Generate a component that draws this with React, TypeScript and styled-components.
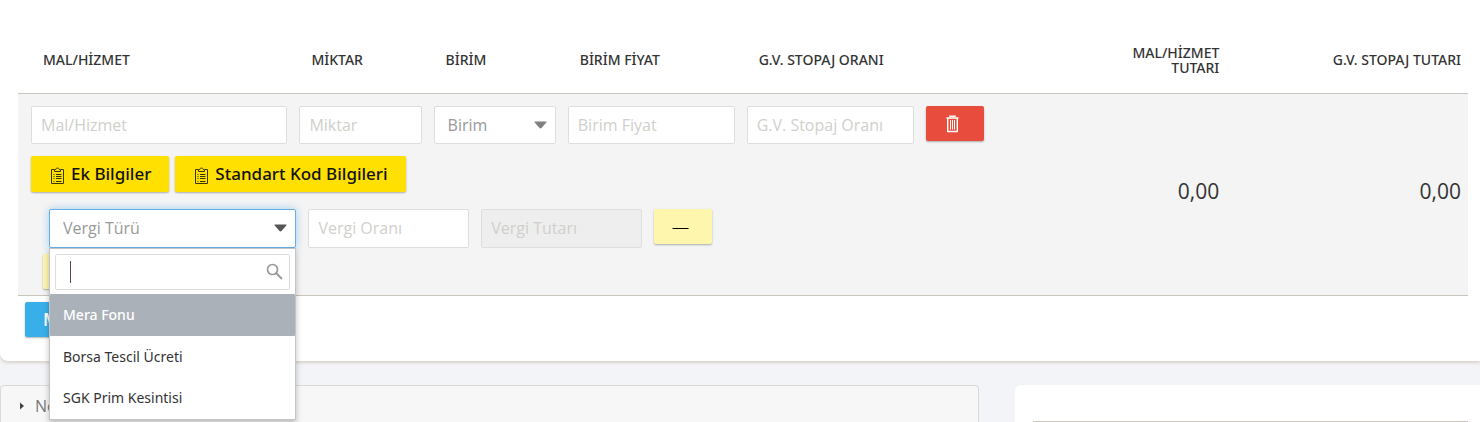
import React from "react";
import styled, { createGlobalStyle } from "styled-components";

const GlobalStyle = createGlobalStyle`
  *, *::before, *::after { box-sizing: border-box; }
  body {
    margin: 0;
    background: #f3f4f8;
    color: #333;
    font: 400 16px/20px "Open Sans", "Noto Sans", sans-serif;
  }
  button, input, select { font: inherit; }
`;

const Page = styled.div`
  min-height: 100vh;
  display: flex;
  flex-direction: column;
  gap: 24px;
  overflow: hidden;
`;

const ItemsCard = styled.section`
  padding: 26px 12px 24px 18px;
  background: #fff;
  border-bottom-left-radius: 8px;
  box-shadow: 0 2px 3px rgba(190, 170, 150, 0.45);
`;

const ItemsTable = styled.table`
  width: 100%;
  table-layout: fixed;
  border-collapse: separate;
  border-spacing: 0;
`;

const HeadCell = styled.th<{ $amount?: boolean }>`
  height: 68px;
  padding: 0 7px;
  border-bottom: 1px solid #c9c5bd;
  font-family: "Noto Sans", "Open Sans", sans-serif;
  font-size: 14px;
  font-weight: 500;
  line-height: 15px;
  vertical-align: middle;
  text-align: ${(p) => (p.$amount ? "right" : "left")};
`;

const EntryCell = styled.td`
  padding: 12px 7px 6px;
  border-bottom: 1px solid #c9c5bd;
  background: #f4f4f4;
`;

const AmountCell = styled.td`
  padding: 0 7px 7px;
  border-bottom: 1px solid #c9c5bd;
  background: #f4f4f4;
  font-size: 21px;
  line-height: 28px;
  text-align: right;
  vertical-align: middle;
`;

const FieldGrid = styled.div`
  display: grid;
  grid-template-columns: 6fr 3fr 3fr 4fr 4fr 4fr;
`;

const TaxGrid = styled.div`
  display: grid;
  grid-template-columns: 3fr 2fr 2fr 5fr;
  margin: 17px 18px 0;
`;

const HeadLabel = styled.label`
  padding-left: 18px;
`;

const Cell = styled.div`
  position: relative;
  min-width: 0;
  padding: 0 6px;
`;

const TextField = styled.input<{ $tall?: boolean }>`
  display: block;
  width: 100%;
  height: ${(p) => (p.$tall ? 39 : 38)}px;
  padding: 0 9px ${(p) => (p.$tall ? 2 : 0)}px;
  border: 1px solid #dedede;
  border-radius: 2px;
  background: #fff;
  color: #333;
  outline: none;
  &::placeholder { color: #d0d0cb; opacity: 1; }
  &:disabled { background: #eee; }
`;

const SelectWrap = styled.div`
  position: relative;
`;

const SelectField = styled.select<{ $open?: boolean }>`
  display: block;
  width: 100%;
  height: ${(p) => (p.$open ? 39 : 38)}px;
  padding: 0 30px ${(p) => (p.$open ? 2 : 0)}px 13px;
  appearance: none;
  border: 1px solid ${(p) => (p.$open ? "#66afe9" : "#dedede")};
  border-radius: 2px;
  background: #fff;
  color: #999;
  outline: none;
  box-shadow: ${(p) => (p.$open ? "0 0 8px rgba(102, 175, 233, 0.6)" : "none")};
`;

const Arrow = styled.svg`
  position: absolute;
  right: 9px;
  top: 15px;
  pointer-events: none;
`;

const tones = {
  yellow: ["#ffe000", "#111"],
  pale: ["#fff6ae", "#111"],
  red: ["#e84c3d", "#fff"],
  blue: ["#39afea", "#fff"],
};

const Button = styled.button<{ $tone: keyof typeof tones }>`
  display: inline-flex;
  align-items: center;
  gap: 5px;
  height: ${(p) => (p.$tone === "yellow" ? 36 : 35)}px;
  min-width: 58px;
  padding: 0 18px;
  border: 0;
  border-radius: 2px;
  background: ${(p) => tones[p.$tone][0]};
  color: ${(p) => tones[p.$tone][1]};
  font-family: "Noto Sans", "Open Sans", sans-serif;
  font-size: 17px;
  font-weight: ${(p) => (p.$tone === "blue" ? 600 : 500)};
  white-space: nowrap;
  box-shadow: 0 1px 2px rgba(0, 0, 0, 0.3);
`;

const ButtonRow = styled.div`
  display: flex;
  gap: 6px;
  padding: 12px 6px 0;
`;

const AddTaxRow = styled.div`
  display: flex;
  padding: 6px 18px 0;
`;

const AddItemRow = styled.div`
  display: flex;
  padding: 6px 7px 0;
`;

const Menu = styled.div`
  position: absolute;
  z-index: 2;
  top: 39px;
  left: 6px;
  right: 6px;
  border: 1px solid #c4c4c4;
  background: #fff;
  box-shadow: 0 3px 6px rgba(0, 0, 0, 0.25);
`;

const SearchBox = styled.div`
  position: relative;
  padding: 5px 5px 4px;
`;

const SearchInput = styled.input`
  display: block;
  width: 100%;
  height: 36px;
  padding: 0 32px 0 14px;
  border: 1px solid #dcdcdc;
  border-radius: 2px;
  outline: none;
`;

const Caret = styled.span`
  position: absolute;
  top: 12px;
  left: 20px;
  width: 1px;
  height: 22px;
  background: #5b4a42;
`;

const SearchIcon = styled.svg`
  position: absolute;
  top: 14px;
  right: 12px;
`;

const OptionList = styled.ul`
  margin: 0;
  padding: 0 0 1px;
  list-style: none;
  font-family: "Noto Sans", "Open Sans", sans-serif;
`;

const Option = styled.li<{ $active?: boolean }>`
  padding: 0 13px;
  font-size: 14px;
  line-height: ${(p) => (p.$active ? 42 : 41)}px;
  border-radius: 1px;
  background: ${(p) => (p.$active ? "#abb1b9" : "transparent")};
  color: ${(p) => (p.$active ? "#fff" : "#333")};
  font-weight: ${(p) => (p.$active ? 500 : 400)};
`;

const LowerGrid = styled.div`
  flex: 1;
  display: grid;
  grid-template-columns: 979fr 465fr;
  gap: 36px;
`;

const NotesPanel = styled.section`
  border: 1px solid #d8dada;
  border-bottom: 0;
  border-radius: 4px 4px 0 0;
  background: #f7f7f7;
`;

const NotesToggle = styled.button`
  display: flex;
  align-items: center;
  gap: 10px;
  width: 100%;
  padding: 10px 18px 6px;
  border: 0;
  background: none;
  color: #777;
  line-height: 20px;
  text-align: left;
`;

const TotalsCard = styled.section`
  padding: 0 12px 0 18px;
  border-radius: 6px 0 0 0;
  background: #fff;
`;

const TotalsHead = styled.div`
  height: 37px;
  border-bottom: 1px solid #c9c5bd;
`;

const SelectArrow = ({ color }: { color: string }) => (
  <Arrow width="13" height="8" viewBox="0 0 13 8" aria-hidden="true">
    <path d="M1.2.5h10.6c.7 0 .9.6.5 1.1L7.5 7c-.6.6-1.4.6-2 0L.7 1.6C.3 1.1.5.5 1.2.5z" fill={color} />
  </Arrow>
);

const ClipboardIcon = () => (
  <svg width="17" height="19" viewBox="0 0 17 19" fill="none" stroke="#3a3600" aria-hidden="true">
    <path d="M5 4.500H2.500v14h12v-14H12" />
    <path d="M5.500 6.500v-2h1.300c.1-2 3.300-2 3.400 0h1.300v2z" />
    <path d="M4.500 9.500h1M7 9.500h5.500M4.500 11.500h1M7 11.500h5.500M4.500 13.500h1M7 13.500h5.500M4.500 16.500h1M7 16.500h5.500" />
  </svg>
);

const TrashIcon = () => (
  <svg width="17" height="19" viewBox="0 0 17 19" fill="none" stroke="#fff" aria-hidden="true">
    <path d="M2.500 4h12M6 3V2.200h5V3" strokeWidth="1.500" />
    <path d="M3.700 4v13.500h9.600V4" strokeWidth="1.400" />
    <path d="M6.500 6v9.500M8.500 6v9.500M10.500 6v9.500" />
  </svg>
);

const MinusIcon = () => (
  <svg width="17" height="4" viewBox="0 0 17 4" aria-hidden="true">
    <path d="M.5 3.500h16" stroke="#000" />
  </svg>
);

const fields = [
  { id: "item", head: "MAL/HİZMET", hint: "Mal/Hizmet" },
  { id: "quantity", head: "MİKTAR", hint: "Miktar" },
  { id: "unit", head: "BİRİM", hint: "Birim", select: true },
  { id: "price", head: "BİRİM FİYAT", hint: "Birim Fiyat" },
  { id: "rate", head: "G.V. STOPAJ ORANI", hint: "G.V. Stopaj Oranı" },
];

const taxes = ["Mera Fonu", "Borsa Tescil Ücreti", "SGK Prim Kesintisi"];

export default function App() {
  return (
    <Page>
      <GlobalStyle />
      <ItemsCard>
        <ItemsTable>
          <colgroup>
            <col style={{ width: `${(9 / 12) * 100}%` }} />
            <col style={{ width: `${(1 / 12) * 100}%` }} />
            <col style={{ width: `${(2 / 12) * 100}%` }} />
          </colgroup>
          <thead>
            <tr>
              <HeadCell scope="col">
                <FieldGrid>
                  {fields.map((f) => (
                    <HeadLabel key={f.id} htmlFor={f.id}>{f.head}</HeadLabel>
                  ))}
                </FieldGrid>
              </HeadCell>
              <HeadCell scope="col" $amount>MAL/HİZMET TUTARI</HeadCell>
              <HeadCell scope="col" $amount>G.V. STOPAJ TUTARI</HeadCell>
            </tr>
          </thead>
          <tbody>
            <tr>
              <EntryCell>
                <FieldGrid>
                  {fields.map((f) => (
                    <Cell key={f.id}>
                      {f.select ? (
                        <SelectWrap>
                          <SelectField id={f.id} defaultValue="">
                            <option value="">{f.hint}</option>
                          </SelectField>
                          <SelectArrow color="#808080" />
                        </SelectWrap>
                      ) : (
                        <TextField id={f.id} placeholder={f.hint} />
                      )}
                    </Cell>
                  ))}
                  <Cell>
                    <Button type="button" $tone="red" aria-label="Sil"><TrashIcon /></Button>
                  </Cell>
                </FieldGrid>
                <ButtonRow>
                  <Button type="button" $tone="yellow"><ClipboardIcon />Ek Bilgiler</Button>
                  <Button type="button" $tone="yellow"><ClipboardIcon />Standart Kod Bilgileri</Button>
                </ButtonRow>
                <TaxGrid>
                  <Cell>
                    <SelectWrap>
                      <SelectField $open aria-label="Vergi Türü" defaultValue="">
                        <option value="">Vergi Türü</option>
                        {taxes.map((t) => <option key={t}>{t}</option>)}
                      </SelectField>
                      <SelectArrow color="#555" />
                    </SelectWrap>
                    <Menu>
                      <SearchBox>
                        <SearchInput aria-label="Vergi ara" />
                        <Caret />
                        <SearchIcon width="17" height="17" viewBox="0 0 17 17" fill="none" stroke="#999" aria-hidden="true">
                          <circle cx="6.500" cy="6.500" r="5" strokeWidth="1.700" />
                          <path d="M10 10l6 6" strokeWidth="2" />
                        </SearchIcon>
                      </SearchBox>
                      <OptionList role="listbox" aria-label="Vergi Türü">
                        {taxes.map((t, i) => (
                          <Option key={t} role="option" aria-selected={i === 0} $active={i === 0}>{t}</Option>
                        ))}
                      </OptionList>
                    </Menu>
                  </Cell>
                  <Cell><TextField $tall placeholder="Vergi Oranı" aria-label="Vergi Oranı" /></Cell>
                  <Cell><TextField $tall disabled placeholder="Vergi Tutarı" aria-label="Vergi Tutarı" /></Cell>
                  <Cell>
                    <Button type="button" $tone="pale" aria-label="Vergiyi kaldır"><MinusIcon /></Button>
                  </Cell>
                </TaxGrid>
                <AddTaxRow>
                  <Button type="button" $tone="pale" aria-label="Vergi ekle" />
                </AddTaxRow>
              </EntryCell>
              <AmountCell>0,00</AmountCell>
              <AmountCell>0,00</AmountCell>
            </tr>
          </tbody>
        </ItemsTable>
        <AddItemRow>
          <Button type="button" $tone="blue">Mal/Hizmet Ekle</Button>
        </AddItemRow>
      </ItemsCard>
      <LowerGrid>
        <NotesPanel>
          <NotesToggle type="button">
            <svg width="6" height="8" viewBox="0 0 6 8" aria-hidden="true">
              <path d="M1 .5L5 4 1 7.500z" fill="#444" />
            </svg>
            Notlar
          </NotesToggle>
        </NotesPanel>
        <TotalsCard><TotalsHead /></TotalsCard>
      </LowerGrid>
    </Page>
  );
}
